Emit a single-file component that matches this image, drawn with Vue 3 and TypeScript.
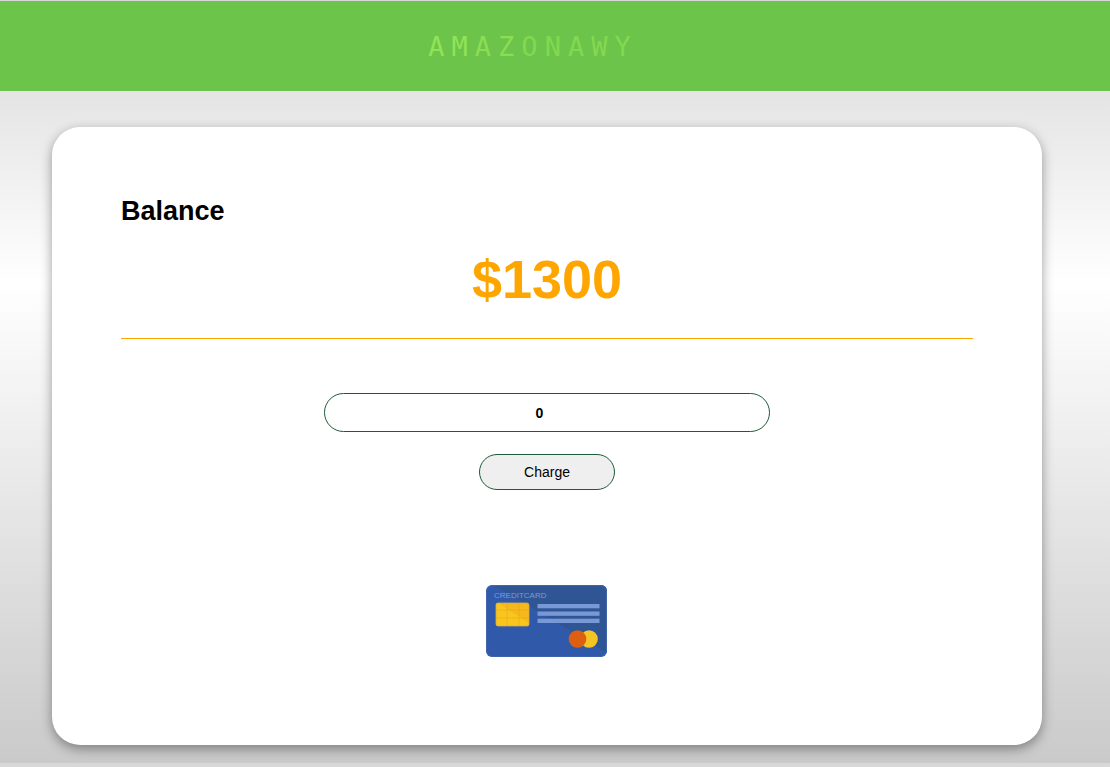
<script setup lang="ts">
import { ref } from 'vue'

interface LogoLetter {
  char: string
  tone: string
}

const letters: LogoLetter[] = [...'AMAZONAWY'].map((char, i) => ({
  char,
  tone: i < 2 ? 'bright' : i < 4 ? 'medium' : 'soft',
}))

const balance = ref(1300)
const amount = ref(0)

function charge(): void {
  balance.value += Number(amount.value) || 0
  amount.value = 0
}
</script>

<template>
  <div class="page">
    <header class="topbar">
      <a class="logo" href="#" aria-label="Amazonawy"><span v-for="(l, i) in letters" :key="i" :class="l.tone">{{ l.char }}</span></a>
    </header>
    <main class="card">
      <h1>Balance</h1>
      <p class="amount">${{ balance }}</p>
      <form @submit.prevent="charge">
        <input v-model="amount" type="number" aria-label="Amount to charge" />
        <button type="submit">Charge</button>
      </form>
      <svg class="credit" viewBox="0 0 122 72" role="img" aria-label="Credit card">
        <defs>
          <clipPath id="card-shape"><rect width="121" height="72" rx="6" /></clipPath>
        </defs>
        <g clip-path="url(#card-shape)">
          <rect width="121" height="72" fill="#3059a9" />
          <path d="M0 0H121V68L68 36L8 0Z" fill="#305595" />
          <rect x="0.5" y="0.5" width="120" height="71" rx="6" fill="none" stroke="#4c70b4" stroke-opacity="0.6" />
        </g>
        <text x="8" y="13" class="credit-label">CREDITCARD</text>
        <rect x="10" y="18" width="33" height="23" rx="2" fill="#f6b81b" />
        <path d="M12 18L43 38V39Q43 41 41 41H12Q10 41 10 39V20Q10 18 12 18Z" fill="#fac51d" />
        <path d="M10 25H21M10 33H21M33 25H43M33 33H43M21 18V41M33 18V41M21 25H33M21 33H33" fill="none" stroke="#e3a41a" stroke-width="0.5" />
        <rect x="10" y="18" width="33" height="23" rx="2" fill="none" stroke="#d6ad48" stroke-width="0.8" />
        <g fill="#7899d6">
          <rect x="51.500" y="19" width="62" height="4.300" />
          <rect x="51.500" y="26.500" width="62" height="4.300" />
          <rect x="51.500" y="33.700" width="62" height="4.300" />
        </g>
        <circle cx="103" cy="54" r="8.800" fill="#f4c525" />
        <circle cx="91.500" cy="54" r="8.800" fill="#dd6012" />
      </svg>
    </main>
  </div>
</template>

<style>
body {
  margin: 0;
  background: #d8d8d8;
}
</style>

<style scoped>
.page {
  box-sizing: border-box;
  min-height: calc(100vh - 4px);
  padding-top: 1px;
  background: linear-gradient(#d7d7d7, #fff 37%, #cacaca);
  font-family: "Liberation Sans", Arial, sans-serif;
  color: #000;
}

.topbar {
  display: flex;
  align-items: center;
  justify-content: center;
  height: 90px;
  padding-right: 44px;
  background: #6dc44b;
}

.logo {
  font-family: "DejaVu Sans Mono", monospace;
  font-size: 27px;
  letter-spacing: 7px;
  text-decoration: none;
}

.bright {
  color: #90e356;
}

.medium {
  color: #8bdd54;
}

.soft {
  color: #84d851;
}

.card {
  display: flex;
  flex-direction: column;
  align-items: center;
  margin: 36px 68px 18px 52px;
  padding: 68px 69px 88px;
  border-radius: 28px;
  background: #fff;
  box-shadow: 0 4px 12px rgba(0, 0, 0, 0.38);
}

h1 {
  align-self: stretch;
  margin: 0;
  font-size: 27px;
  line-height: 32px;
}

.amount {
  align-self: stretch;
  margin: 20px 0 0;
  padding-bottom: 26px;
  border-bottom: 1px solid orange;
  color: orange;
  font-size: 54px;
  font-weight: 700;
  line-height: 65px;
  text-align: center;
}

form {
  display: flex;
  flex-direction: column;
  align-items: center;
  gap: 22px;
  width: 100%;
  margin-top: 54px;
}

input,
button {
  box-sizing: border-box;
  border: 1px solid #1f5a38;
  border-radius: 20px;
  color: #000;
  font-family: inherit;
}

input {
  width: 446px;
  max-width: 100%;
  height: 39px;
  background: #fff;
  font-size: 14px;
  font-weight: 700;
  text-align: center;
}

button {
  width: 136px;
  height: 36px;
  background: #efefef;
  font-size: 14px;
}

.credit {
  width: 122px;
  height: 72px;
  margin-top: 95px;
}

.credit-label {
  fill: #7d9bd3;
  font-size: 8px;
}
</style>
